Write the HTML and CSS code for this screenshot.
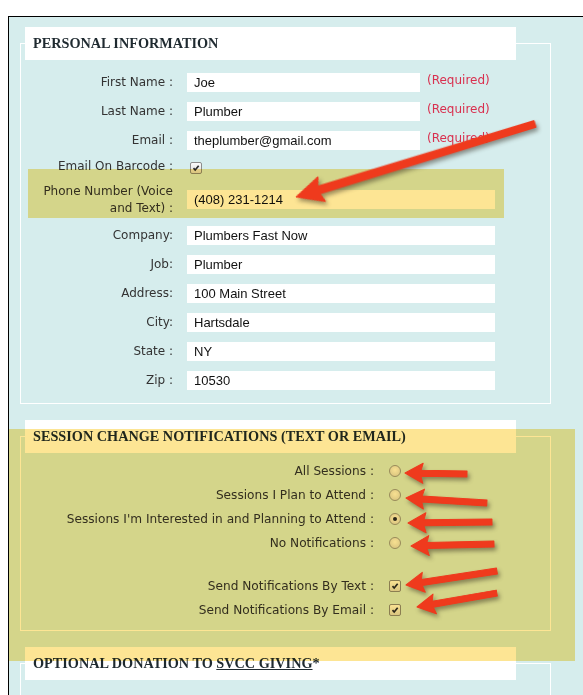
FILE: index.html
```html
<!DOCTYPE html>
<html>
<head>
<meta charset="utf-8">
<link rel="stylesheet" href="styles.css">
</head>
<body>
<div class="page">
  <section class="box">
    <div class="legend">PERSONAL INFORMATION</div>
    <div class="rows rows-personal">
      <div class="row r29"><span class="lbl">First Name :</span><input class="field short" value="Joe"><span class="req">(Required)</span></div>
      <div class="row r29"><span class="lbl">Last Name :</span><input class="field short" value="Plumber"><span class="req">(Required)</span></div>
      <div class="row r29"><span class="lbl">Email :</span><input class="field short" value="theplumber@gmail.com"><span class="req">(Required)</span></div>
      <div class="row r23"><span class="lbl">Email On Barcode :</span><span class="cb cb-inline"><svg viewBox="0 0 12 12"><path d="M3 6.2 L5 8.4 L9.2 3.2" /></svg></span></div>
      <div class="row r43"><span class="lbl">Phone Number (Voice and Text) :</span><input class="field long" value="(408) 231-1214"></div>
      <div class="row r29"><span class="lbl">Company:</span><input class="field long" value="Plumbers Fast Now"></div>
      <div class="row r29"><span class="lbl">Job:</span><input class="field long" value="Plumber"></div>
      <div class="row r29"><span class="lbl">Address:</span><input class="field long" value="100 Main Street"></div>
      <div class="row r29"><span class="lbl">City:</span><input class="field long" value="Hartsdale"></div>
      <div class="row r29"><span class="lbl">State :</span><input class="field long" value="NY"></div>
      <div class="row r29"><span class="lbl">Zip :</span><input class="field long" value="10530"></div>
    </div>
  </section>

  <section class="box">
    <div class="legend">SESSION CHANGE NOTIFICATIONS (TEXT OR EMAIL)</div>
    <div class="rows rows-notif">
      <div class="row r24"><span class="lbl wide">All Sessions :</span><span class="radio"></span></div>
      <div class="row r24"><span class="lbl wide">Sessions I Plan to Attend :</span><span class="radio"></span></div>
      <div class="row r24"><span class="lbl wide">Sessions I'm Interested in and Planning to Attend :</span><span class="radio checked"></span></div>
      <div class="row r24"><span class="lbl wide">No Notifications :</span><span class="radio"></span></div>
      <div class="spacer"></div>
      <div class="row r24"><span class="lbl wide">Send Notifications By Text :</span><span class="cb"><svg viewBox="0 0 12 12"><path d="M3 6.2 L5 8.4 L9.2 3.2" /></svg></span></div>
      <div class="row r24"><span class="lbl wide">Send Notifications By Email :</span><span class="cb"><svg viewBox="0 0 12 12"><path d="M3 6.2 L5 8.4 L9.2 3.2" /></svg></span></div>
    </div>
  </section>

  <section class="box box-last">
    <div class="legend">OPTIONAL DONATION TO <a class="link" href="#">SVCC GIVING</a>*</div>
  </section>
</div>

<div class="hl hl-phone"></div>
<div class="hl hl-notif"></div>

<svg class="arrows" width="583" height="695" viewBox="0 0 583 695">
  <g class="arrow-set">
    <polygon transform="translate(296 197) rotate(-17)" points="0,0 27,-13 24,-4 250,-3.5 250,3.5 24,4 27,13" />
    <polygon transform="translate(405 473) rotate(1)" points="0,0 18,-10 16,-3 62,-3 62,3 16,3 18,10" />
    <polygon transform="translate(406 498) rotate(3.5)" points="0,0 18,-10 16,-3 81,-3 81,3 16,3 18,10" />
    <polygon transform="translate(408 523) rotate(-0.7)" points="0,0 18,-10 16,-3 84,-3 84,3 16,3 18,10" />
    <polygon transform="translate(411 546) rotate(-1.4)" points="0,0 18,-10 16,-3 83,-3 83,3 16,3 18,10" />
    <polygon transform="translate(406 585) rotate(-8.7)" points="0,0 18,-10 16,-3 92,-3 92,3 16,3 18,10" />
    <polygon transform="translate(417 607) rotate(-9.9)" points="0,0 18,-10 16,-3 81,-3 81,3 16,3 18,10" />
  </g>
</svg>
</body>
</html>
```

FILE: styles.css
```css
html, body {
  margin: 0;
  padding: 0;
  background: #fff;
}
body {
  position: relative;
  width: 583px;
  height: 695px;
  overflow: hidden;
}
.page {
  margin: 16px 0 0 8px;
  border-top: 1px solid #000;
  border-left: 1px solid #000;
  background: #d6eded;
  height: 760px;
  padding-top: 26px;
  box-sizing: border-box;
}
.box {
  width: 531px;
  margin: 0 0 32px 11px;
  border: 1px solid #fff;
  box-sizing: border-box;
  padding-bottom: 8px;
}
.box-last {
  height: 120px;
}
.legend {
  margin: -17px 0 0 4px;
  width: 491px;
  height: 33px;
  line-height: 33px;
  background: #fff;
  box-sizing: border-box;
  padding-left: 8px;
  font-family: "Liberation Serif", serif;
  font-weight: bold;
  font-size: 14.25px;
  color: #1f2a30;
}
.link {
  color: #1f2a30;
  text-decoration: underline;
}
.rows-personal {
  padding-top: 8px;
}
.rows-notif {
  padding-top: 6px;
}
.row {
  display: flex;
  align-items: center;
}
.r29 { height: 29px; }
.r23 { height: 23px; }
.r43 { height: 43px; }
.r24 { height: 24px; }
.spacer { height: 19px; }
.lbl {
  width: 152px;
  padding-left: 12px;
  box-sizing: border-box;
  text-align: right;
  font-family: "DejaVu Sans", Verdana, sans-serif;
  font-size: 12px;
  line-height: 17px;
  color: #333;
  margin-right: 14px;
  flex: none;
}
.lbl.wide {
  width: 353px;
  margin-right: 15px;
  font-size: 12.15px;
}
.field {
  height: 19px;
  border: none;
  outline: none;
  margin: 0;
  padding: 0 0 0 7px;
  box-sizing: border-box;
  background: #fff;
  font-family: "Liberation Sans", Arial, sans-serif;
  font-size: 13px;
  color: #111;
  flex: none;
}
.field.short { width: 233px; }
.field.long { width: 308px; }
.req {
  margin-left: 7px;
  margin-bottom: 6px;
  font-family: "DejaVu Sans", Verdana, sans-serif;
  font-size: 12px;
  color: #d9304f;
}
.cb {
  width: 12px;
  height: 12px;
  border: 1px solid #8c8c8c;
  border-radius: 2px;
  box-sizing: border-box;
  background: linear-gradient(#fbfbfb, #dcdcdc);
  flex: none;
  display: flex;
}
.cb-inline {
  margin-left: 3px;
  margin-top: 2px;
}
.cb svg {
  width: 10px;
  height: 10px;
}
.cb path {
  fill: none;
  stroke: #2a2a2a;
  stroke-width: 2;
}
.radio {
  width: 12px;
  height: 12px;
  border: 1px solid #9a9a9a;
  border-radius: 50%;
  box-sizing: border-box;
  background: radial-gradient(circle at 50% 40%, #fafafa, #d6d6d6);
  flex: none;
  display: flex;
  align-items: center;
  justify-content: center;
}
.radio.checked::after {
  content: "";
  width: 4px;
  height: 4px;
  border-radius: 50%;
  background: #2b2b2b;
}
.hl {
  position: absolute;
  background: #fde594;
  mix-blend-mode: multiply;
}
.hl-phone {
  left: 28px;
  top: 169px;
  width: 476px;
  height: 49px;
}
.hl-notif {
  left: 9px;
  top: 429px;
  width: 566px;
  height: 232px;
}
.arrows {
  position: absolute;
  left: 0;
  top: 0;
}
.arrow-set polygon {
  fill: #ef3a1d;
  stroke: #ef3a1d;
  stroke-width: 1;
  stroke-linejoin: round;
}
.arrow-set {
  filter: drop-shadow(2px 3px 2px rgba(40, 30, 20, 0.45));
}
```
